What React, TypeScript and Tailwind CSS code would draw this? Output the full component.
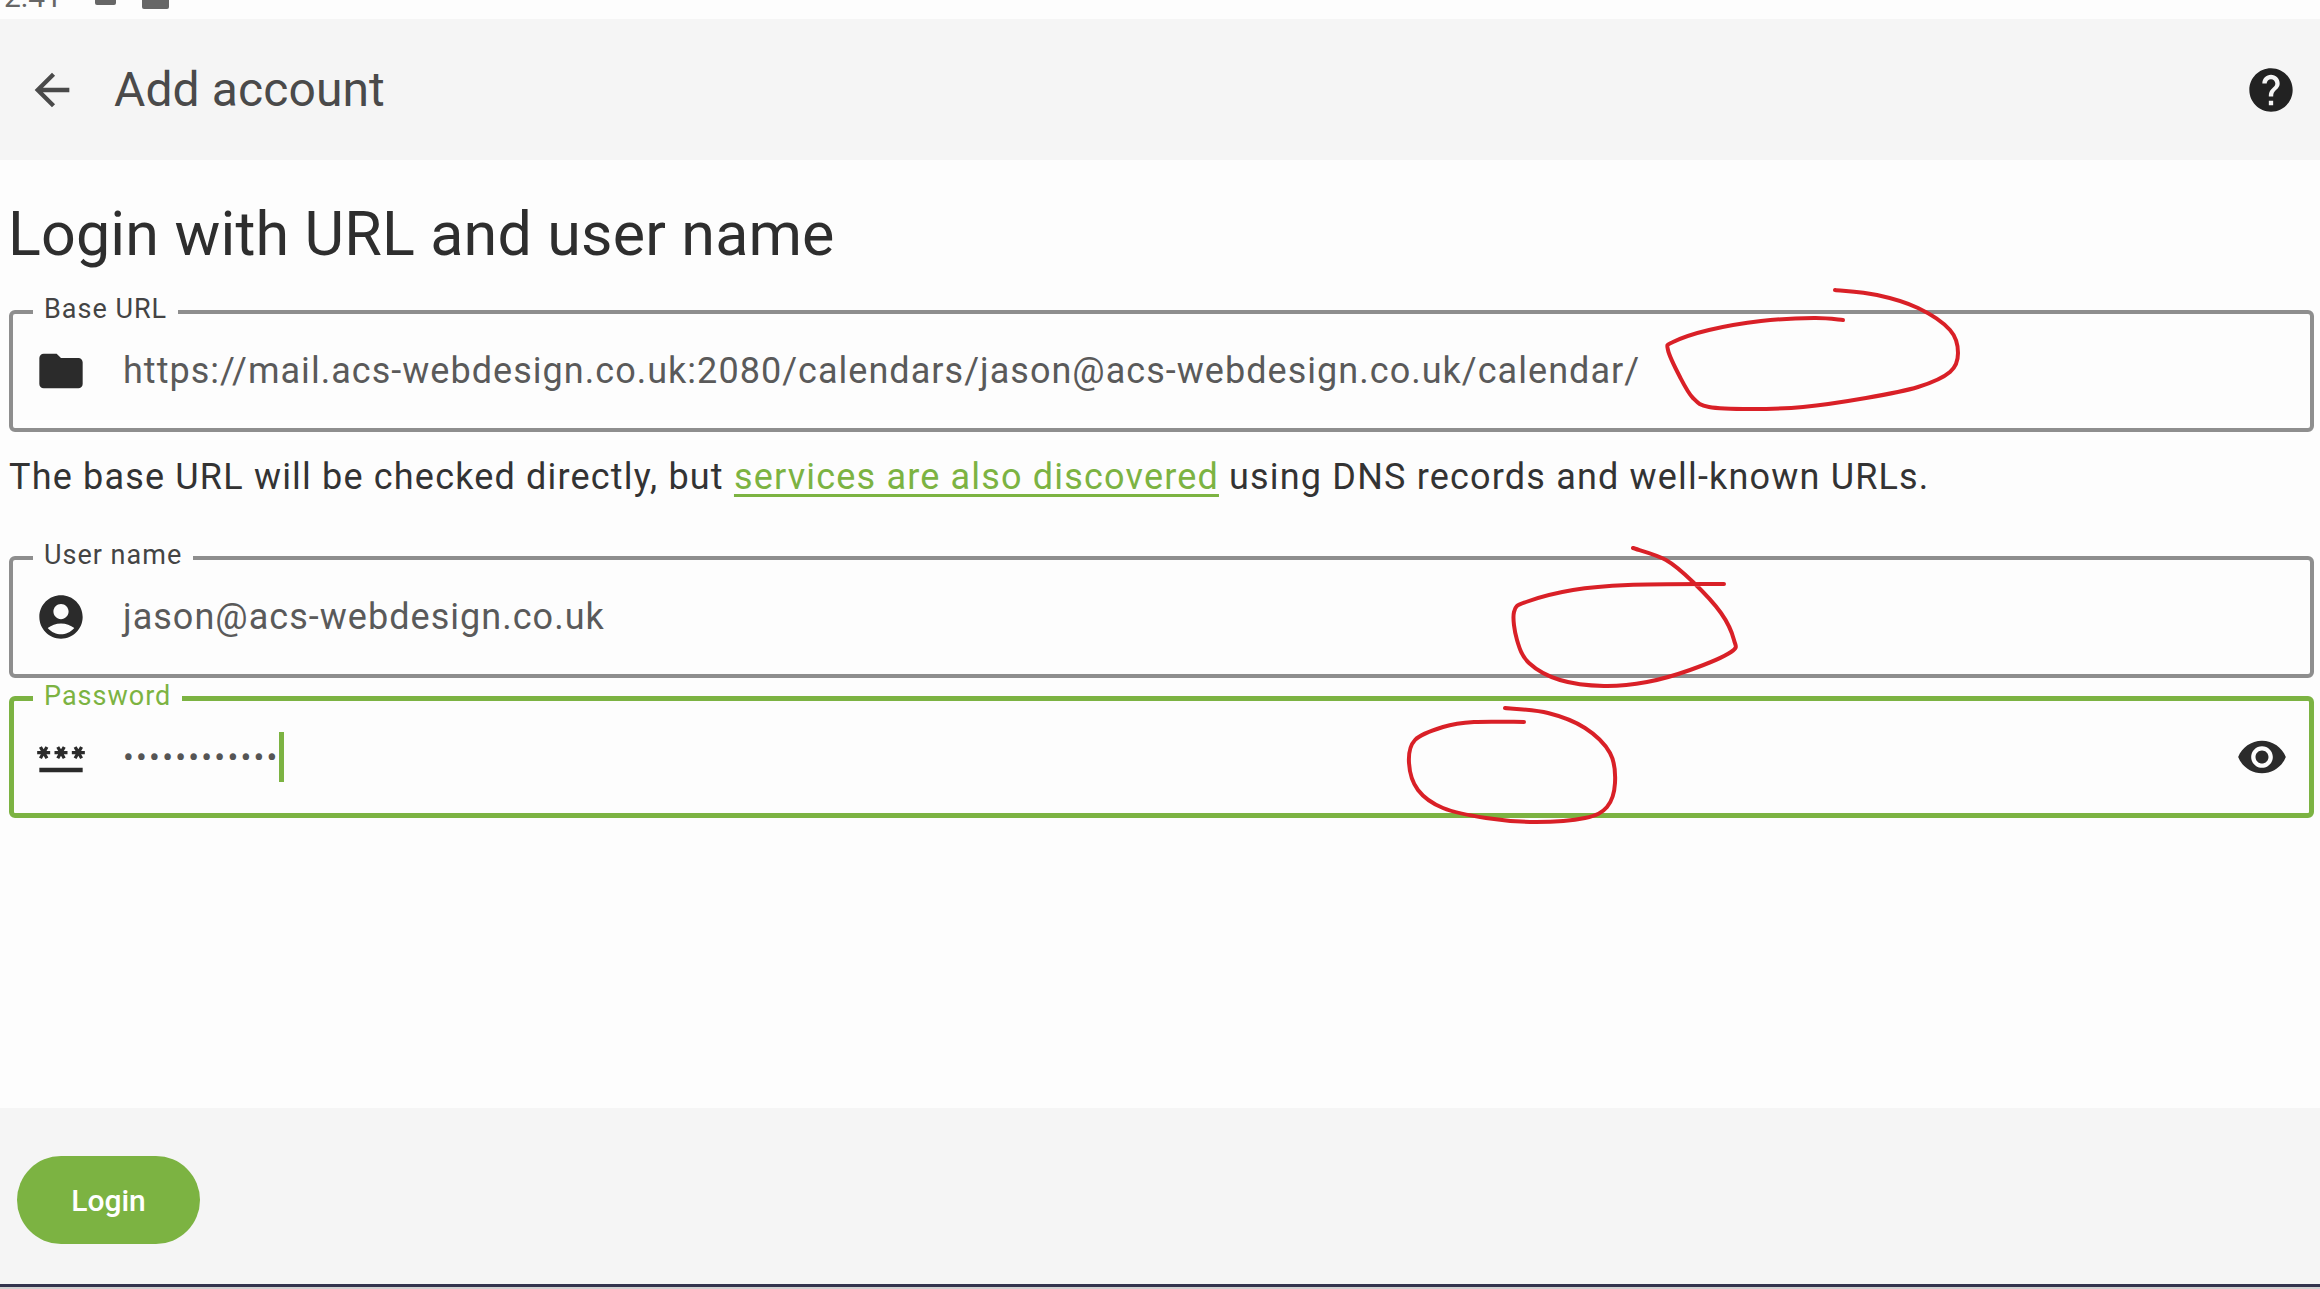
import type { ReactNode } from 'react';

const ICONS = {
  back: 'M20 11H7.83l5.59-5.59L12 4l-8 8 8 8 1.41-1.41L7.83 13H20v-2z',
  help: 'M12 2C6.48 2 2 6.48 2 12s4.48 10 10 10 10-4.48 10-10S17.52 2 12 2zm1 17h-2v-2h2v2zm2.07-7.75l-.9.92C13.45 12.9 13 13.5 13 15h-2v-.5c0-1.1.45-2.1 1.17-2.83l1.24-1.26c.37-.36.59-.86.59-1.41 0-1.1-.9-2-2-2s-2 .9-2 2H8c0-2.21 1.79-4 4-4s4 1.79 4 4c0 .88-.36 1.68-.93 2.25z',
  folder: 'M10 4H4c-1.1 0-1.99.9-1.99 2L2 18c0 1.1.9 2 2 2h16c1.1 0 2-.9 2-2V8c0-1.1-.9-2-2-2h-8l-2-2z',
  account: 'M12 2C6.48 2 2 6.48 2 12s4.48 10 10 10 10-4.48 10-10S17.52 2 12 2zm0 4c1.93 0 3.5 1.57 3.5 3.5S13.93 13 12 13s-3.5-1.57-3.5-3.5S10.07 6 12 6zm0 14c-2.03 0-4.43-.82-6.14-2.88C7.55 15.8 9.68 15 12 15s4.45.8 6.14 2.12C16.43 19.18 14.03 20 12 20z',
  password: 'M2 17h20v2H2zm1.15-4.05L4 11.47l.85 1.48 1.3-.75-.85-1.48H7v-1.5H5.3l.85-1.47L4.85 7 4 8.47 3.15 7l-1.3.75.85 1.47H1v1.5h1.7l-.85 1.48 1.3.75zm6.7-.75l1.3.75.85-1.48.85 1.48 1.3-.75-.85-1.48H15v-1.5h-1.7l.85-1.47-1.3-.75L12 8.47 11.15 7l-1.3.75.85 1.47H9v1.5h1.7l-.85 1.48zM23 9.22h-1.7l.85-1.47-1.3-.75L20 8.47 19.15 7l-1.3.75.85 1.47H17v1.5h1.7l-.85 1.48 1.3.75.85-1.48.85 1.48 1.3-.75-.85-1.48H23v-1.5z',
  eye: 'M12 4.5C7 4.5 2.73 7.61 1 12c1.73 4.39 6 7.5 11 7.5s9.27-3.11 11-7.5c-1.73-4.39-6-7.5-11-7.5zM12 17c-2.76 0-5-2.24-5-5s2.24-5 5-5 5 2.24 5 5-2.24 5-5 5zm0-8c-1.66 0-3 1.34-3 3s1.34 3 3 3 3-1.34 3-3-1.34-3-3-3z',
};

const Icon = ({ d, className }: { d: string; className: string }) => (
  <svg viewBox="0 0 24 24" fill="currentColor" className={`h-[52px] w-[52px] shrink-0 ${className}`}>
    <path d={d} />
  </svg>
);

// pen strokes drawn on top of the screenshot
const SCRIBBLES: number[][][] = [
  [[1835,290],[1877,295],[1918,308],[1950,330],[1958,353],[1950,372],[1918,387],[1866,398],[1803,407],[1751,409],[1709,407],[1693,398],[1680,377],[1668,350],[1673,342],[1709,330],[1761,321],[1814,318],[1843,320]],
  [[1633,548],[1666,560],[1693,582],[1721,613],[1734,640],[1731,652],[1690,670],[1647,682],[1604,686],[1560,680],[1529,663],[1517,640],[1514,612],[1526,602],[1573,590],[1628,585],[1724,584]],
  [[1505,708],[1548,713],[1585,728],[1610,753],[1615,783],[1607,807],[1585,818],[1536,822],[1486,818],[1443,808],[1418,790],[1409,763],[1415,740],[1443,727],[1474,722],[1524,722]],
];

const smoothPath = (pts: number[][]) => {
  let d = `M${pts[0][0]} ${pts[0][1]}`;
  for (let i = 0; i < pts.length - 1; i++) {
    const p0 = pts[i - 1] ?? pts[i];
    const p1 = pts[i];
    const p2 = pts[i + 1];
    const p3 = pts[i + 2] ?? p2;
    const c1x = p1[0] + (p2[0] - p0[0]) / 6;
    const c1y = p1[1] + (p2[1] - p0[1]) / 6;
    const c2x = p2[0] - (p3[0] - p1[0]) / 6;
    const c2y = p2[1] - (p3[1] - p1[1]) / 6;
    d += ` C${c1x} ${c1y} ${c2x} ${c2y} ${p2[0]} ${p2[1]}`;
  }
  return d;
};

type FieldProps = {
  label: string;
  icon: string;
  focused?: boolean;
  className?: string;
  children: ReactNode;
  trailing?: ReactNode;
};

const Field = ({ label, icon, focused, className = '', children, trailing }: FieldProps) => (
  <div
    className={`relative flex h-[122px] items-center rounded-[6px] ${className} ${
      focused ? 'border-[5px] border-[#7cb342] pl-[21px]' : 'border-[4px] border-[#8e8e8e] pl-[22px]'
    }`}
  >
    <span
      className={`absolute top-[-21px] bg-[#fdfdfd] px-[11px] text-[27px] leading-[32px] tracking-[1px] ${
        focused ? 'left-[19px] text-[#7cb342]' : 'left-[20px] text-[#444444]'
      }`}
    >
      {label}
    </span>
    <Icon d={icon} className="text-[#2b2b2b]" />
    <div className="ml-[36px] flex-1 text-[36px] leading-[44px] tracking-[1.03px] text-[#5a5a5a]">{children}</div>
    {trailing}
  </div>
);

export default function App() {
  return (
    <div className="relative flex h-[1289px] flex-col overflow-hidden bg-[#fdfdfd] font-['Roboto',sans-serif]">
      <div className="flex h-[19px] shrink-0 items-start overflow-hidden pl-[4px] text-[#666666]">
        <span className="mt-[-18px] w-[91px] text-[30px] leading-[30px]">2:41</span>
        <span className="h-[5px] w-[21px] shrink-0 rounded-b-[2px] bg-[#666666]" />
        <span className="ml-[26px] h-[9px] w-[27px] shrink-0 rounded-b-[2px] bg-[#666666]" />
      </div>

      <header className="flex h-[141px] shrink-0 items-center bg-[#f5f5f5] pl-[26px] pr-[23px] text-[#4a4a4a]">
        <Icon d={ICONS.back} />
        <h2 className="ml-[36px] flex-1 text-[48px] leading-[56px] tracking-[0.1px]">Add account</h2>
        <Icon d={ICONS.help} className="text-[#222222]" />
      </header>

      <main className="flex-1 pl-[9px] pr-[6px] pt-[38px] text-[#2e2e2e]">
        <h1 className="ml-[-1px] text-[61px] leading-[72px] tracking-[0.15px]">Login with URL and user name</h1>

        <Field label="Base URL" icon={ICONS.folder} className="mt-[40px]">
          https://mail.acs-webdesign.co.uk:2080/calendars/jason@acs-webdesign.co.uk/calendar/
        </Field>

        <p className="mt-[23px] text-[36px] leading-[44px] tracking-[1.18px] text-[#333333]">
          The base URL will be checked directly, but{' '}
          <span className="text-[#7cb342] underline underline-offset-[5px]">services are also discovered</span> using
          DNS records and well-known URLs.
        </p>

        <Field label="User name" icon={ICONS.account} className="mt-[57px]">
          jason@acs-webdesign.co.uk
        </Field>

        <Field
          label="Password"
          icon={ICONS.password}
          focused
          className="mt-[18px]"
          trailing={<Icon d={ICONS.eye} className="mr-[21px] text-[#2b2b2b]" />}
        >
          <div className="flex items-center">
            <span className="text-[32px] leading-[44px] tracking-[2.25px] text-[#555555]">••••••••••••</span>
            <span className="ml-[-1px] h-[50px] w-[5px] bg-[#7cb342]" />
          </div>
        </Field>
      </main>

      <footer className="flex h-[176px] shrink-0 items-center bg-[#f5f5f5] pl-[17px] pt-[8px]">
        <button className="h-[88px] w-[183px] rounded-full bg-[#7cb342] text-[30px] font-medium text-white">Login</button>
      </footer>
      <div className="h-[3px] shrink-0 bg-[#33334d]" />
      <div className="h-[2px] shrink-0 bg-[#d0d0d0]" />

      <svg viewBox="0 0 2320 1289" fill="none" className="pointer-events-none absolute inset-0 h-[1289px] w-[2320px]">
        {SCRIBBLES.map((pts, i) => (
          <path key={i} d={smoothPath(pts)} stroke="#d92027" strokeWidth={4} strokeLinecap="round" strokeLinejoin="round" />
        ))}
      </svg>
    </div>
  );
}
